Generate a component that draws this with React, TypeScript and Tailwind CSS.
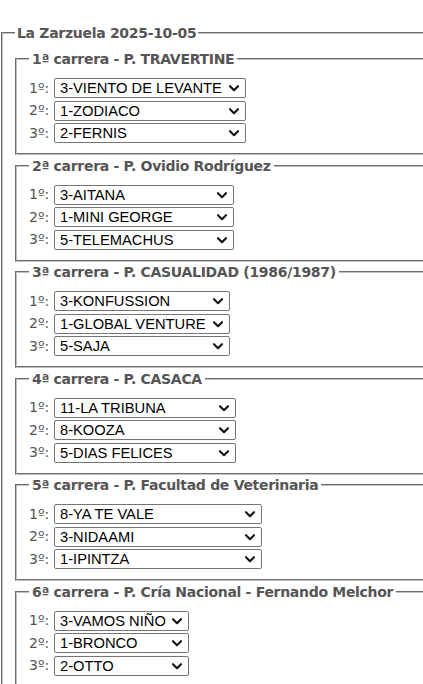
import { useState } from "react"

interface Race {
  name: string
  horses: string[]
  width: number
}

const races: Race[] = [
  { name: "1ª carrera - P. TRAVERTINE", horses: ["3-VIENTO DE LEVANTE", "1-ZODIACO", "2-FERNIS"], width: 192 },
  { name: "2ª carrera - P. Ovidio Rodríguez", horses: ["3-AITANA", "1-MINI GEORGE", "5-TELEMACHUS"], width: 180 },
  { name: "3ª carrera - P. CASUALIDAD (1986/1987)", horses: ["3-KONFUSSION", "1-GLOBAL VENTURE", "5-SAJA"], width: 176 },
  { name: "4ª carrera - P. CASACA", horses: ["11-LA TRIBUNA", "8-KOOZA", "5-DIAS FELICES"], width: 182 },
  { name: "5ª carrera - P. Facultad de Veterinaria", horses: ["8-YA TE VALE", "3-NIDAAMI", "1-IPINTZA"], width: 208 },
  { name: "6ª carrera - P. Cría Nacional - Fernando Melchor", horses: ["3-VAMOS NIÑO", "1-BRONCO", "2-OTTO"], width: 135 },
]

const places = ["1º:", "2º:", "3º:"]

function HorseSelect({ options, initial, width }: { options: string[]; initial: string; width: number }) {
  const [value, setValue] = useState(initial)
  return (
    <div className="relative" style={{ width }}>
      <select
        value={value}
        onChange={e => setValue(e.target.value)}
        className="block w-full h-[20px] appearance-none border border-[#767676] rounded-[2px] bg-white pl-[5px] pr-[16px] py-0 text-[14.7px] leading-[18px] text-black font-['Liberation_Sans',Arial,sans-serif]"
      >
        {options.map(o => (
          <option key={o} value={o}>{o}</option>
        ))}
      </select>
      {/* dropdown chevron */}
      <svg
        className="absolute right-[7px] top-[7px] pointer-events-none"
        width="10"
        height="7"
        viewBox="0 0 10 7"
        fill="none"
      >
        <path d="M1 1.2 L5 5.2 L9 1.2" stroke="#111" strokeWidth="2.1" strokeLinecap="round" strokeLinejoin="round" />
      </svg>
    </div>
  )
}

function RaceBox({ race }: { race: Race }) {
  return (
    <fieldset className="border-2 border-[#c0c0c0] [border-style:groove] mb-[2.5px] pl-[12px] pr-[12px] pt-[10px] pb-[8.5px]">
      <legend className="px-[3px] text-[14px] leading-[16px] font-bold tracking-[-0.3px] text-[#555]">
        {race.name}
      </legend>
      {places.map((p, i) => (
        <div key={p} className="flex items-center h-[22.5px]">
          <span className="w-[25px] text-[14px] text-[#555]">{p}</span>
          <HorseSelect options={race.horses} initial={race.horses[i]} width={race.width} />
        </div>
      ))}
    </fieldset>
  )
}

export default function App() {
  return (
    <div className="w-[423px] h-[684px] overflow-hidden bg-white pt-[25px] font-['DejaVu_Sans',Verdana,Tahoma,sans-serif]">
      <fieldset className="w-[600px] ml-px border-2 border-[#c0c0c0] [border-style:groove] pl-[12px] pr-[12px] pt-[10px] pb-[10px]">
        <legend className="px-[2px] text-[14px] leading-[16px] font-bold tracking-[-0.3px] text-[#555]">
          La Zarzuela 2025-10-05
        </legend>
        {races.map(r => (
          <RaceBox key={r.name} race={r} />
        ))}
      </fieldset>
    </div>
  )
}
